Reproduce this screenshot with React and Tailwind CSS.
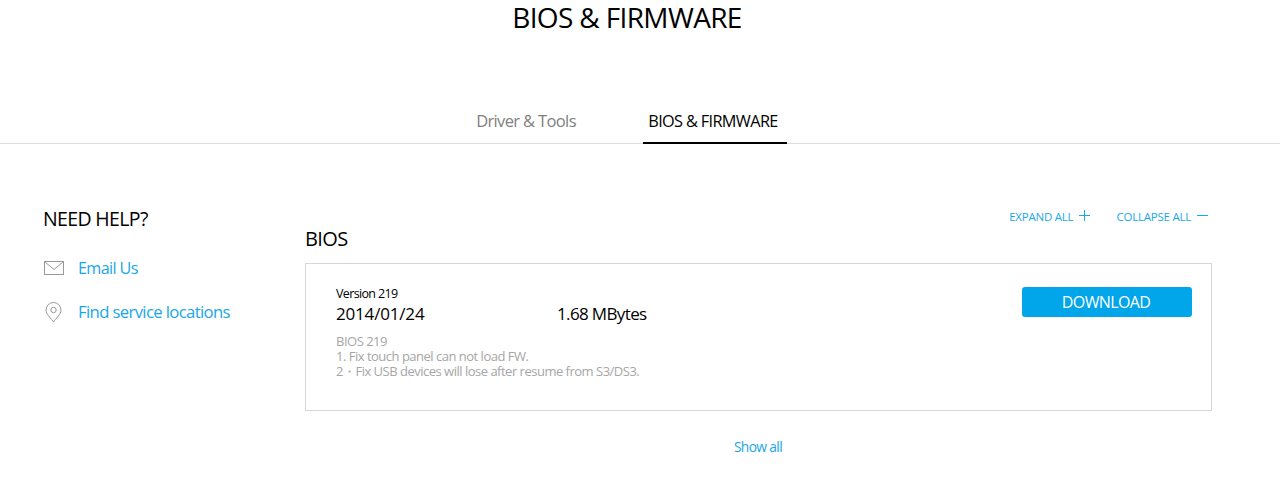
import React from 'react';

const MailIcon = () => (
    <svg width="20" height="14" viewBox="0 0 20 14" fill="none" stroke="#999" strokeWidth="1">
        <rect x="0.5" y="0.5" width="19" height="13" />
        <path d="M1 1l9 7.5L19 1" />
    </svg>
);

const PinIcon = () => (
    <svg width="18" height="21" viewBox="0 0 18 21" fill="none" stroke="#999" strokeWidth="1">
        <path d="M8.5 20C6.2 16.5 1 12.5 1 8a7.5 7.5 0 0 1 15 0C16 12.5 10.8 16.5 8.5 20z" />
        <circle cx="8.5" cy="8" r="2.7" />
    </svg>
);

const App = () => {
    return (
        <div className="w-[1280px] h-[487px] bg-white overflow-hidden font-['Open_Sans',sans-serif] tracking-[-0.04em]">
            {/* Title */}
            <h1 className="w-[1254px] text-center text-[28px] leading-[34px] text-black">BIOS &amp; FIRMWARE</h1>

            {/* Tabs */}
            <div className="mt-[71px] h-[39px] border-b border-[#dcdcdc] flex pl-[469px]">
                <div className="w-[114px] h-[39px] text-center text-[16.5px] leading-[32px] text-[#808080]">Driver &amp; Tools</div>
                <div className="ml-[60px] w-[144px] h-[39px] pr-[4px] border-b-2 border-black text-center text-[16.3px] leading-[32px] text-black">BIOS &amp; FIRMWARE</div>
            </div>

            <div className="flex pl-[43px] pt-[60px]">
                {/* Sidebar */}
                <div className="w-[262px]">
                    <div className="text-[19.5px] leading-[30px] text-black">NEED HELP?</div>
                    <div className="mt-[22px] flex items-center h-[24px]">
                        <div className="w-[35px]"><div className="ml-px w-fit"><MailIcon /></div></div>
                        <span className="text-[16.2px] text-[#1aa7e8]">Email Us</span>
                    </div>
                    <div className="mt-[20px] flex items-center h-[24px]">
                        <div className="w-[35px] flex"><div className="ml-[2px]"><PinIcon /></div></div>
                        <span className="text-[16.7px] text-[#1aa7e8]">Find service locations</span>
                    </div>
                </div>

                {/* Main */}
                <div className="w-[907px]">
                    <div className="flex justify-end items-center h-[25px] pr-[4px] text-[11.5px] font-medium tracking-[-0.02em] text-[#1aa7e8]">
                        <span>EXPAND ALL</span>
                        <svg className="ml-[6px] self-start mt-[6px]" width="11" height="11" viewBox="0 0 11 11" stroke="#1aa7e8" strokeWidth="1"><path d="M0 5.5h11M5.5 0v11" /></svg>
                        <span className="ml-[26px]">COLLAPSE ALL</span>
                        <svg className="ml-[6px] self-start mt-[6px]" width="11" height="11" viewBox="0 0 11 11" stroke="#1aa7e8" strokeWidth="1"><path d="M0 5.5h11" /></svg>
                    </div>
                    <div className="text-[20px] leading-[26px] text-black mt-[-3px]">BIOS</div>
                    <div className="mt-[11px] h-[148px] border border-[#d6d6d6] flex justify-between pl-[30px] pr-[19px] pt-[22px]">
                        <div>
                            <div className="text-[12.5px] leading-[16px] text-black">Version 219</div>
                            <div className="flex text-[17px] leading-[24px] text-black">
                                <span className="w-[221px] tracking-[-0.18px]">2014/01/24</span>
                                <span>1.68 MBytes</span>
                            </div>
                            <div className="mt-[8px] text-[13px] leading-[15px] tracking-[-0.5px] text-[#a6a6a6]">
                                <div>BIOS 219</div>
                                <div>1. Fix touch panel can not load FW.</div>
                                <div>2・Fix USB devices will lose after resume from S3/DS3.</div>
                            </div>
                        </div>
                        <div className="mt-px w-[170px] h-[30px] pr-[2px] bg-[#00a6e9] rounded-[3px] text-center text-white text-[16px] leading-[30px]">DOWNLOAD</div>
                    </div>
                    <div className="mt-[27px] text-center text-[13.8px] leading-[18px] text-[#1aa7e8] w-[906px]">Show all</div>
                </div>
            </div>
        </div>
    );
};

export default App;
